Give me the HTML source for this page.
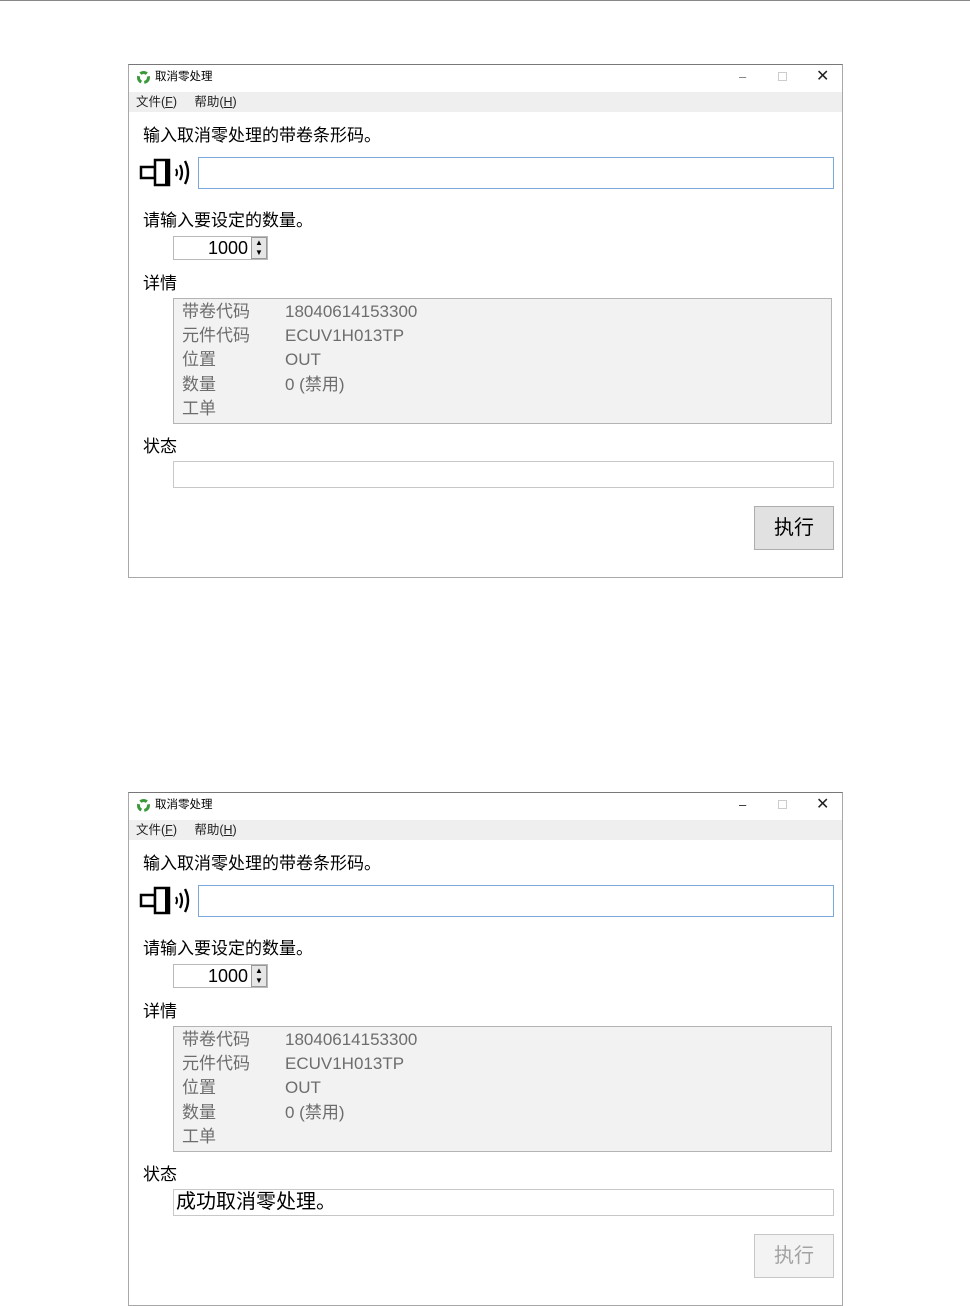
<!DOCTYPE html>
<html><head><meta charset="utf-8"><style>
*{margin:0;padding:0;box-sizing:border-box}
body{width:970px;height:1305px;background:#fff;position:relative;overflow:hidden;font-family:"Liberation Sans","Microsoft YaHei","Noto Sans CJK SC",sans-serif;color:#000}
.topline{position:absolute;left:0;top:0;width:970px;height:1px;background:#888}
.win{position:absolute;left:128px;width:715px;height:514px;border:1px solid #a8a8a8;border-top-color:#777;background:#fff}
.a{position:absolute;white-space:nowrap;line-height:1}
.title{top:7px;left:26px;font-size:11.5px}
.menu{position:absolute;left:0;top:27px;width:713px;height:20px;background:#efefef}
.lbl{font-size:17px}
.box{position:absolute;background:#fff;border:1px solid #c8c8c8}
.det{position:absolute;left:44px;top:233px;width:659px;height:126px;background:#f2f2f2;border:1px solid #b4b4b4}
.det .a{font-size:17px;color:#6d6d6d}
.btn{position:absolute;left:625px;top:441px;width:80px;height:44px;border:1px solid #adadad;background:#e1e1e1;font-size:20px;text-align:center;line-height:42px}
.btn.dis{border-color:#c6c6c6;background:#f3f3f3;color:#a3a3a3}
</style></head><body>
<div class="topline"></div>

<div class="win" style="top:64px">
 <svg class="a" style="left:8px;top:6px" width="13" height="13" viewBox="0 0 13 13"><circle cx="6.5" cy="6.5" r="5" fill="none" stroke="#3a9a3a" stroke-width="3" stroke-dasharray="7 3"/></svg>
 <div class="a title">取消零处理</div>
 <div class="a" style="left:610px;top:5px;font-size:13px;color:#777">&#8211;</div>
 <div class="a" style="left:649px;top:7px;width:9px;height:9px;border:1px solid #ccc"></div>
 <div class="a" style="left:687px;top:4px;font-size:16px;color:#222">&#10005;</div>
 <div class="menu"><div class="a" style="left:7px;top:4px;font-size:12.5px;color:#222">文件(<u>F</u>)&nbsp;&nbsp;&nbsp;&nbsp;&nbsp;帮助(<u>H</u>)</div></div>
 <div class="a lbl" style="left:14px;top:62px">输入取消零处理的带卷条形码。</div>
 <svg class="a" style="left:10px;top:93px" width="56" height="30" viewBox="0 0 56 30">
  <rect x="2" y="9" width="14" height="11" fill="#fff" stroke="#000" stroke-width="2.5"/>
  <rect x="16" y="2" width="14" height="25" fill="#fff" stroke="#000" stroke-width="2.5"/>
  <rect x="26" y="2" width="5" height="25" fill="#000"/>
  <path d="M37 11 Q39 14.5 37 18" fill="none" stroke="#000" stroke-width="2"/>
  <path d="M41 7 Q45 14.5 41 22" fill="none" stroke="#000" stroke-width="2.2"/>
  <path d="M46 3 Q52 14.5 46 26" fill="none" stroke="#000" stroke-width="2.4"/>
 </svg>
 <div class="box" style="left:69px;top:92px;width:636px;height:32px;border-color:#7aa8dc"></div>
 <div class="a lbl" style="left:14px;top:147px">请输入要设定的数量。</div>
 <div class="box" style="left:44px;top:171px;width:95px;height:24px;border-color:#b9b9b9"></div>
 <div class="a" style="left:79px;top:174px;font-size:18px">1000</div>
 <div class="a" style="left:122px;top:172px;width:16px;height:22px;background:#e6e6e6;border:1px solid #999;font-size:8px;text-align:center;line-height:10px">▲<br>▼</div>
 <div class="a lbl" style="left:14px;top:210px">详情</div>
 <div class="det">
  <div class="a" style="left:8px;top:4px">带卷代码</div><div class="a" style="left:111px;top:4px">18040614153300</div>
  <div class="a" style="left:8px;top:28px">元件代码</div><div class="a" style="left:111px;top:28px">ECUV1H013TP</div>
  <div class="a" style="left:8px;top:52px">位置</div><div class="a" style="left:111px;top:52px">OUT</div>
  <div class="a" style="left:8px;top:77px">数量</div><div class="a" style="left:111px;top:77px">0 (禁用)</div>
  <div class="a" style="left:8px;top:101px">工单</div>
 </div>
 <div class="a lbl" style="left:14px;top:373px">状态</div>
 <div class="box" style="left:44px;top:396px;width:661px;height:27px"></div>
 <div class="btn">执行</div>
</div>

<div class="win" style="top:792px">
 <svg class="a" style="left:8px;top:6px" width="13" height="13" viewBox="0 0 13 13"><circle cx="6.5" cy="6.5" r="5" fill="none" stroke="#3a9a3a" stroke-width="3" stroke-dasharray="7 3"/></svg>
 <div class="a title">取消零处理</div>
 <div class="a" style="left:610px;top:5px;font-size:13px;color:#222">&#8211;</div>
 <div class="a" style="left:649px;top:7px;width:9px;height:9px;border:1px solid #ccc"></div>
 <div class="a" style="left:687px;top:4px;font-size:16px;color:#222">&#10005;</div>
 <div class="menu"><div class="a" style="left:7px;top:4px;font-size:12.5px;color:#222">文件(<u>F</u>)&nbsp;&nbsp;&nbsp;&nbsp;&nbsp;帮助(<u>H</u>)</div></div>
 <div class="a lbl" style="left:14px;top:62px">输入取消零处理的带卷条形码。</div>
 <svg class="a" style="left:10px;top:93px" width="56" height="30" viewBox="0 0 56 30">
  <rect x="2" y="9" width="14" height="11" fill="#fff" stroke="#000" stroke-width="2.5"/>
  <rect x="16" y="2" width="14" height="25" fill="#fff" stroke="#000" stroke-width="2.5"/>
  <rect x="26" y="2" width="5" height="25" fill="#000"/>
  <path d="M37 11 Q39 14.5 37 18" fill="none" stroke="#000" stroke-width="2"/>
  <path d="M41 7 Q45 14.5 41 22" fill="none" stroke="#000" stroke-width="2.2"/>
  <path d="M46 3 Q52 14.5 46 26" fill="none" stroke="#000" stroke-width="2.4"/>
 </svg>
 <div class="box" style="left:69px;top:92px;width:636px;height:32px;border-color:#7aa8dc"></div>
 <div class="a lbl" style="left:14px;top:147px">请输入要设定的数量。</div>
 <div class="box" style="left:44px;top:171px;width:95px;height:24px;border-color:#b9b9b9"></div>
 <div class="a" style="left:79px;top:174px;font-size:18px">1000</div>
 <div class="a" style="left:122px;top:172px;width:16px;height:22px;background:#e6e6e6;border:1px solid #999;font-size:8px;text-align:center;line-height:10px">▲<br>▼</div>
 <div class="a lbl" style="left:14px;top:210px">详情</div>
 <div class="det">
  <div class="a" style="left:8px;top:4px">带卷代码</div><div class="a" style="left:111px;top:4px">18040614153300</div>
  <div class="a" style="left:8px;top:28px">元件代码</div><div class="a" style="left:111px;top:28px">ECUV1H013TP</div>
  <div class="a" style="left:8px;top:52px">位置</div><div class="a" style="left:111px;top:52px">OUT</div>
  <div class="a" style="left:8px;top:77px">数量</div><div class="a" style="left:111px;top:77px">0 (禁用)</div>
  <div class="a" style="left:8px;top:101px">工单</div>
 </div>
 <div class="a lbl" style="left:14px;top:373px">状态</div>
 <div class="box" style="left:44px;top:396px;width:661px;height:27px"></div>
 <div class="a" style="left:47px;top:399px;font-size:20px">成功取消零处理。</div>
 <div class="btn dis">执行</div>
</div>
</body></html>
